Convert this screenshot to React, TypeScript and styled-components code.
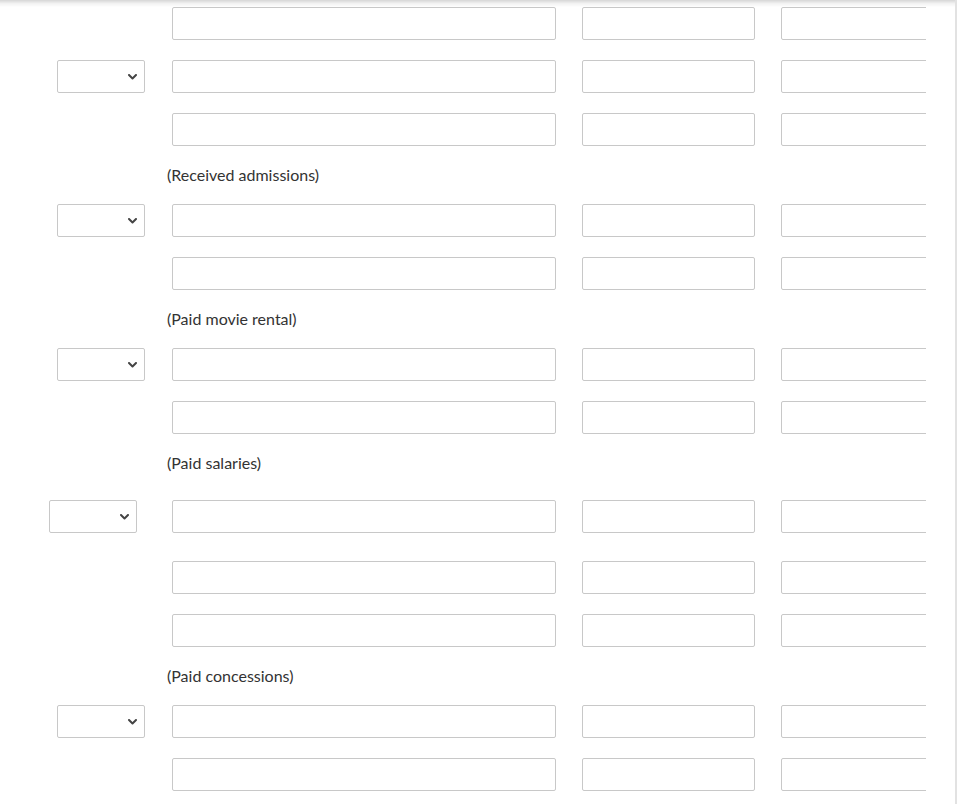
import React from 'react';
import styled, { createGlobalStyle } from 'styled-components';

const GlobalStyle = createGlobalStyle`
  html, body {
    margin: 0;
    padding: 0;
    background: #ffffff;
  }
  body {
    font-family: Lato, "Open Sans", Arial, sans-serif;
    color: #333333;
  }
`;

type Line =
  | { kind: 'row'; select?: boolean; shift?: number; space?: number }
  | { kind: 'label'; text: string };

//ENTRY TABLE LINES
const lines: Line[] = [
  { kind: 'row' },
  { kind: 'row', select: true },
  { kind: 'row' },
  { kind: 'label', text: '(Received admissions)' },
  { kind: 'row', select: true },
  { kind: 'row' },
  { kind: 'label', text: '(Paid movie rental)' },
  { kind: 'row', select: true },
  { kind: 'row' },
  { kind: 'label', text: '(Paid salaries)' },
  { kind: 'row', select: true, shift: -8, space: 8 },
  { kind: 'row', space: 8 },
  { kind: 'row' },
  { kind: 'label', text: '(Paid concessions)' },
  { kind: 'row', select: true },
  { kind: 'row' },
];

const Chevron = () => (
  <svg width="9" height="6" viewBox="0 0 9 6">
    <path
      d="M1 1 L4.5 4.5 L8 1"
      fill="none"
      stroke="#444"
      strokeWidth="2"
      strokeLinecap="round"
      strokeLinejoin="round"
    />
  </svg>
);

function App() {
  return (
    <StyledPage>
      <GlobalStyle />
      <TopShade />
      <Sheet>
        {lines.map((line, i) =>
          line.kind === 'label' ? (
            <Caption key={i}>{line.text}</Caption>
          ) : (
            <Row key={i} $space={line.space ?? 0}>
              <SelectCell $shift={line.shift ?? 0}>
                {line.select && (
                  <SelectBox>
                    <Picker defaultValue="">
                      <option value=""></option>
                      <option value="dr">Dr</option>
                      <option value="cr">Cr</option>
                    </Picker>
                    <ChevronWrap>
                      <Chevron />
                    </ChevronWrap>
                  </SelectBox>
                )}
              </SelectCell>
              <Field $width={384} />
              <Field $width={173} />
              <Field $width={173} />
            </Row>
          )
        )}
      </Sheet>
    </StyledPage>
  );
}

const StyledPage = styled.div`
  width: 955px;
  min-height: 804px;
  border-right: 2px solid #e2e2e2;
  background: #fff;
`;

const TopShade = styled.div`
  position: fixed;
  top: 0;
  left: 0;
  width: 955px;
  height: 7px;
  background: linear-gradient(
    to bottom,
    rgba(0, 0, 0, 0.16),
    rgba(0, 0, 0, 0.05) 50%,
    rgba(0, 0, 0, 0)
  );
  pointer-events: none;
  z-index: 5;
`;

const Sheet = styled.div`
  width: 926px;
  overflow: hidden;
  padding-top: 7px;
  display: flex;
  flex-direction: column;
`;

const Row = styled.div<{ $space: number }>`
  display: flex;
  align-items: center;
  gap: 26px;
  height: 33px;
  margin-top: ${(p) => p.$space}px;
  margin-bottom: 20px;
  flex-shrink: 0;
`;

const SelectCell = styled.div<{ $shift: number }>`
  width: 146px;
  flex-shrink: 0;
  display: flex;
  padding-left: ${(p) => 57 + p.$shift}px;
  box-sizing: border-box;
`;

const SelectBox = styled.div`
  position: relative;
  width: 88px;
  height: 33px;
`;

const Picker = styled.select`
  appearance: none;
  -webkit-appearance: none;
  width: 100%;
  height: 100%;
  box-sizing: border-box;
  border: 1px solid #c8c8c8;
  border-radius: 2px;
  background: #fff;
  font-family: Lato, Arial, sans-serif;
  font-size: 14px;
  padding: 0 8px;
  outline: none;
`;

const ChevronWrap = styled.span`
  position: absolute;
  right: 8px;
  top: 14px;
  display: flex;
  pointer-events: none;
`;

const Field = styled.input.attrs({ type: 'text' })<{ $width: number }>`
  width: ${(p) => p.$width}px;
  height: 33px;
  flex-shrink: 0;
  box-sizing: border-box;
  border: 1px solid #c8c8c8;
  border-radius: 2px;
  background: #fff;
  font-family: Lato, Arial, sans-serif;
  font-size: 14px;
  padding: 0 8px;
  outline: none;
`;

const Caption = styled.div`
  height: 18px;
  line-height: 18px;
  margin-bottom: 20px;
  padding-left: 167px;
  font-size: 16px;
  color: #333;
  flex-shrink: 0;
`;

export default App;
